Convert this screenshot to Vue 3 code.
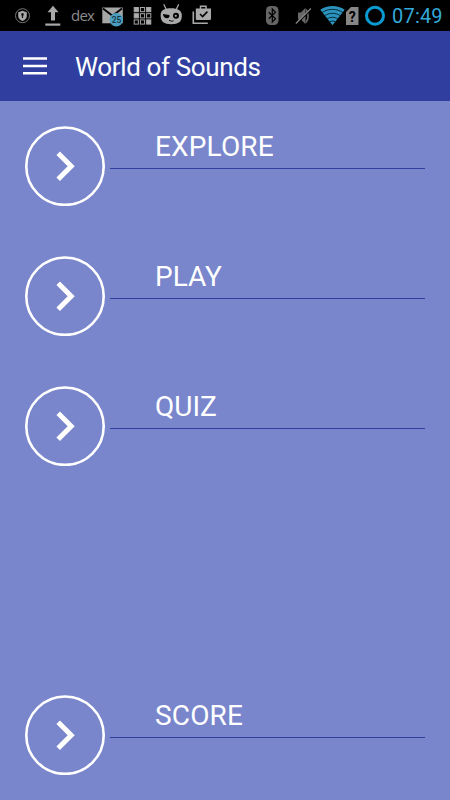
<script setup>
import { ref } from 'vue'

const title = 'World of Sounds'
const clock = '07:49'

// main menu entries
const menuItems = ref([
  { id: 'explore', label: 'EXPLORE' },
  { id: 'play', label: 'PLAY' },
  { id: 'quiz', label: 'QUIZ' },
  { id: 'score', label: 'SCORE' }
])

const gridCells = [0, 1, 2, 3, 4, 5, 6, 7, 8].map((i) => ({
  x: 1.2 + (i % 3) * 6.2,
  y: 7.5 + Math.floor(i / 3) * 6.2,
  filled: [0, 2, 3, 8].includes(i)
}))
</script>

<template>
  <div class="screen">
    <!-- Status bar -->
    <div class="status-bar">
      <div class="status-left">
        <svg class="shield" width="16" height="31" viewBox="0 0 16 31">
          <circle cx="7.5" cy="15.7" r="7" fill="none" stroke="#777" stroke-width="1" />
          <path d="M7.500 10.800l4.300 1.500v3.600c0 2.300-1.800 4.200-4.300 5.200-2.500-1-4.300-2.900-4.300-5.200v-3.600z" fill="#a8a8a8" />
          <path d="M7.500 13.100a1.400 1.400 0 0 1 .6 2.600v2.300H6.900v-2.300a1.400 1.400 0 0 1 .6-2.600z" fill="#111" />
        </svg>
        <svg class="upload" width="16" height="31" viewBox="0 0 16 31">
          <path d="M8 5.800l5.500 6.500H10v8.200H6v-8.200H2.500z" fill="#a9a9a9" />
          <path d="M.3 23.500h15v2.200H.3z" fill="#a9a9a9" />
        </svg>
        <span class="dex">dex</span>
        <svg class="mail" width="23" height="31" viewBox="0 0 23 31">
          <path d="M.3 7.500h20.500v15.800H.3z" fill="#a6a6a6" />
          <path d="M1 8.500l9.500 7.300 9.500-7.300" fill="none" stroke="#000" stroke-width="1.800" />
          <circle cx="14.300" cy="19.700" r="6.700" fill="#4b9fc0" />
          <text x="14.500" y="23" text-anchor="middle" class="badge-text">25</text>
        </svg>
        <svg class="grid" width="19" height="31" viewBox="0 0 19 31">
          <rect
            v-for="(cell, i) in gridCells"
            :key="i"
            :x="cell.x"
            :y="cell.y"
            width="4.200"
            height="4.200"
            :fill="cell.filled ? '#adadad' : 'none'"
            stroke="#a6a6a6"
            stroke-width="1"
          />
        </svg>
        <svg class="droid" width="22" height="31" viewBox="0 0 22 31">
          <path d="M4 4.800l2.200 4.500M18.500 4.800l-2.200 4.500" stroke="#a9a9a9" stroke-width="1.300" stroke-linecap="round" />
          <path d="M11 8.300c3.500 0 6 .4 8.300 2C21.500 11.800 22 14 21.800 16.500c-.3 5-3 7.700-10.500 7.700S1 21.500.7 16.500C.5 14 .8 12 2.700 10.300 5 8.700 7.500 8.300 11 8.300z" fill="#a9a9a9" />
          <path d="M3 14l6.300 1c.8 1.500-.5 3.200-2.300 3.200-2.300 0-4-1.500-4-4.200z" fill="#000" />
          <circle cx="16" cy="15.800" r="3" fill="#000" />
          <circle cx="15.800" cy="15.800" r="1.100" fill="#a9a9a9" />
          <path d="M9 20.300l3 1 1.500-.6" fill="none" stroke="#000" stroke-width=".9" />
        </svg>
        <svg class="bag" width="20" height="31" viewBox="0 0 20 31">
          <path d="M1.300 11.500v11.700h14.500" fill="none" stroke="#a9a9a9" stroke-width="1.600" />
          <path d="M8.500 9V6.300h5.500V9" fill="none" stroke="#a9a9a9" stroke-width="1.500" />
          <path d="M3.800 8.500H19v10.300a1.300 1.300 0 0 1-1.300 1.300H5.100a1.300 1.300 0 0 1-1.300-1.300z" fill="#a9a9a9" />
          <path d="M8 14l2.600 2.600 4.800-5" fill="none" stroke="#000" stroke-width="1.600" />
        </svg>
      </div>

      <div class="status-right">
        <svg class="bluetooth" width="13" height="31" viewBox="0 0 13 31">
          <rect x="0" y="6" width="12.500" height="19" rx="4.500" fill="#666" />
          <path d="M2.800 12.200l6.700 6.500-3.200 3.300V9l3.200 3.300-6.700 6.500" fill="none" stroke="#000" stroke-width="1.200" />
        </svg>
        <svg class="mute" width="17" height="31" viewBox="0 0 17 31">
          <path d="M3 12.500h3l4.500-4.800v16.500L6 19.500H3z" fill="#686868" />
          <path d="M11 9.500c2.800 3 2.800 10 0 13" fill="none" stroke="#686868" stroke-width="1.600" />
          <path d="M2.500 23L15.500 10" stroke="#000" stroke-width="1.500" />
          <path d="M.8 23.500L15.800 8.500" stroke="#858585" stroke-width="1.200" />
        </svg>
        <svg class="wifi" width="25" height="31" viewBox="0 0 25 31">
          <path d="M.3 9.800c7-5 17.400-5 24.400 0L12.500 25.300z" fill="#2b93bd" />
          <path d="M2 12.600c6-4.300 15-4.300 21 0M4.500 15.800c4.700-3.300 11.300-3.300 16 0M7 19c3.300-2.300 7.700-2.300 11 0M9.500 22c2-1.300 4-1.300 6 0" fill="none" stroke="#062a3a" stroke-width="1" />
        </svg>
        <svg class="sim" width="13" height="31" viewBox="0 0 13 31">
          <path d="M5 7h7.500v18H0V12z" fill="#868686" />
          <text x="6.300" y="21.500" text-anchor="middle" class="sim-text">?</text>
        </svg>
        <svg class="battery" width="20" height="31" viewBox="0 0 20 31">
          <circle cx="10" cy="15.700" r="8.500" fill="none" stroke="#0a9bd2" stroke-width="3" />
        </svg>
        <span class="clock">{{ clock }}</span>
      </div>
    </div>

    <!-- Toolbar -->
    <header class="toolbar">
      <button class="menu-btn" aria-label="Menu">
        <svg width="24" height="18" viewBox="0 0 24 18">
          <path d="M0 1.500h24M0 9h24M0 16.200h24" stroke="#fff" stroke-width="2.600" />
        </svg>
      </button>
      <h1 class="title">{{ title }}</h1>
    </header>

    <!-- Menu -->
    <main class="menu">
      <div v-for="item in menuItems" :key="item.id" :class="['menu-item', item.id]">
        <div class="circle">
          <svg width="80" height="80" viewBox="0 0 80 80">
            <circle cx="40" cy="40.200" r="38.700" fill="none" stroke="#fff" stroke-width="2.600" />
            <path d="M33.200 27.200L46.200 40.200 33.200 53.200" fill="none" stroke="#fff" stroke-width="5" />
          </svg>
        </div>
        <div class="label">{{ item.label }}</div>
      </div>
    </main>
  </div>
</template>

<style>
body {
  margin: 0;
  background: #7986cb;
}
</style>

<style scoped>
.screen {
  width: 100%;
  height: 100vh;
  display: flex;
  flex-direction: column;
  overflow: hidden;
  background: #7986cb;
  font-family: Roboto, 'Noto Sans', sans-serif;
  color: #fff;
}

svg {
  display: block;
  flex: none;
}

/* Status bar */
.status-bar {
  flex: none;
  display: flex;
  justify-content: space-between;
  height: 31px;
  padding: 0 8px 0 15px;
  background: #000;
}

.status-left,
.status-right {
  display: flex;
}

.upload {
  margin-left: 14px;
}

.dex {
  width: 31px;
  margin-left: 10px;
  color: #8c8c8c;
  font-family: 'Open Sans', 'Noto Sans', sans-serif;
  font-size: 15px;
  letter-spacing: -0.8px;
  line-height: 31px;
}

.grid {
  margin-left: 8px;
}

.droid {
  margin-left: 8px;
}

.bag {
  margin-left: 10px;
}

.badge-text {
  fill: #16323f;
  font-size: 8.5px;
  font-weight: 500;
}

.mute {
  margin-left: 16px;
}

.wifi {
  margin-left: 8px;
}

.sim {
  margin-left: 1px;
}

.sim-text {
  fill: #000;
  font-size: 14px;
  font-weight: 700;
}

.battery {
  margin-left: 6px;
}

.clock {
  width: 50px;
  margin-left: 7px;
  color: #33a9d9;
  font-size: 20px;
  letter-spacing: 0.2px;
  line-height: 33px;
  white-space: nowrap;
}

/* Toolbar */
.toolbar {
  flex: none;
  display: flex;
  align-items: center;
  height: 70px;
  padding-left: 23px;
  background: #303f9f;
}

.menu-btn {
  width: 24px;
  padding: 0;
  border: none;
  background: none;
}

.title {
  margin: 2px 0 0 28px;
  font-size: 26px;
  font-weight: 400;
  letter-spacing: -0.37px;
  line-height: 30px;
}

/* Menu */
.menu {
  flex: 1;
  display: flex;
  flex-direction: column;
  gap: 50px;
  padding: 25px;
}

.menu-item {
  display: flex;
  gap: 5px;
  height: 80px;
}

.menu-item.score {
  margin-top: auto;
}

.label {
  flex: 1;
  box-sizing: border-box;
  height: 43px;
  padding: 5px 0 0 45px;
  border-bottom: 1px solid #303f9f;
  font-size: 28px;
  line-height: 32px;
}

.explore .label,
.score .label {
  letter-spacing: 0.15px;
}
</style>
